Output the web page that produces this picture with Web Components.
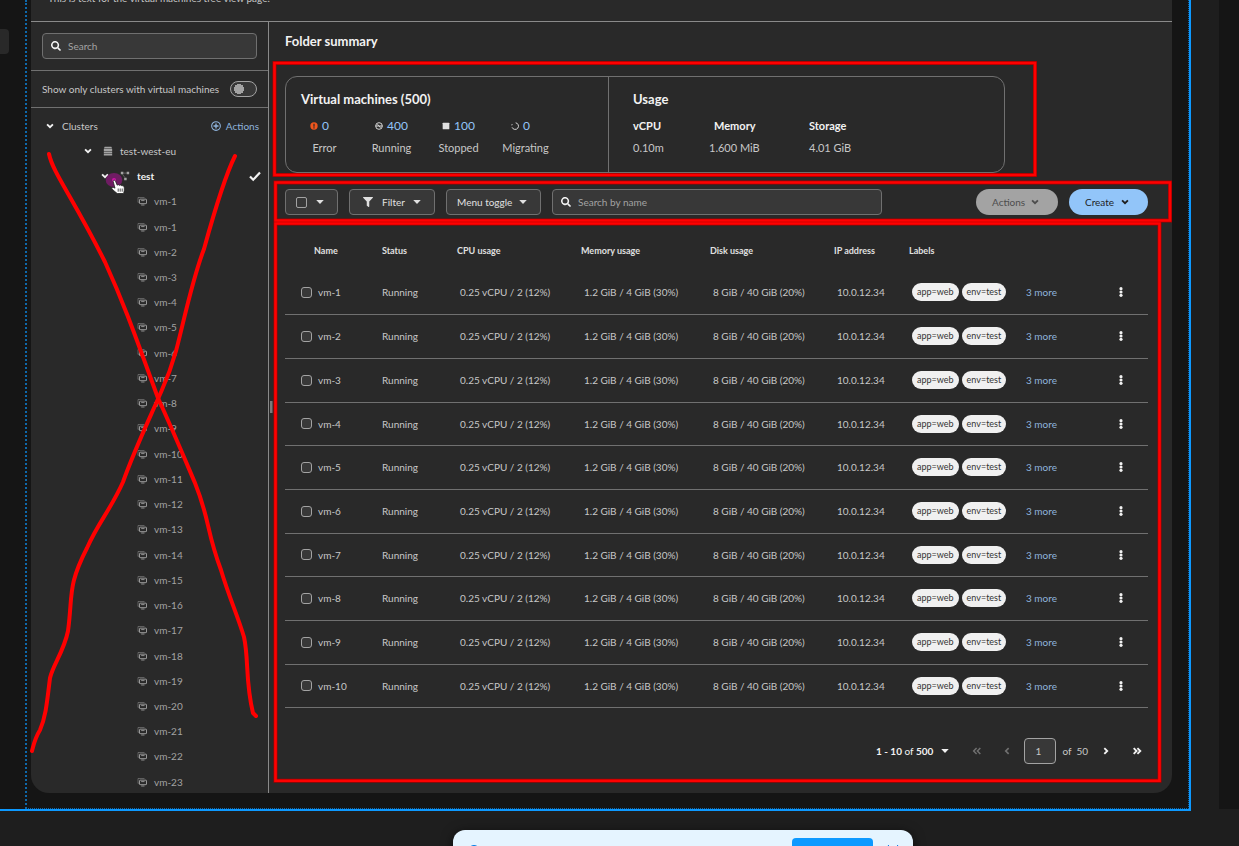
<!DOCTYPE html>
<html lang="en"><head><meta charset="utf-8"><title>Virtual machines</title>
<style>
:root{--text:#c7c7c7;--strong:#f2f2f2;--muted:#a3a3a3;--line:#707070;--field:#383838;--panel:#292929;--link:#92c5f9;--soft-link:#8fb4dd}
html,body{margin:0;height:100%;overflow:hidden}
body{background:#1e1e1e;color:var(--text);font:400 10px/14px Lato,"Noto Sans",sans-serif}
</style></head><body>
<design-canvas></design-canvas>
<script>
const BASE = `*{box-sizing:border-box}button,input{font:inherit;color:inherit}svg{display:block;flex:none}a{text-decoration:none;color:var(--link)}`;
const define = (name, css, html) => customElements.define(name, class extends HTMLElement {
  connectedCallback() {
    if (this.shadowRoot) return;
    const root = this.attachShadow({mode:'open'});
    root.innerHTML = `<style>${BASE}${css}</style>` + (typeof html === 'function' ? html(this) : html);
  }
});

const ICONS = {
  search:[512,'<path d="M505 443 405 343c-4-4-11-7-17-7h-16a208 208 0 1 0-36 36v16c0 6 3 13 7 17l100 100c9 9 24 9 34 0l28-28c9-10 9-25 0-34zM208 336a128 128 0 1 1 0-256 128 128 0 0 1 0 256z"/>'],
  chevron:[12,'<path d="M2.500 4 6 7.500 9.500 4" fill="none" stroke="currentColor" stroke-width="2.200"/>'],
  right:[12,'<path d="M4 2.500 7.500 6 4 9.500" fill="none" stroke="currentColor" stroke-width="2.200"/>'],
  left:[12,'<path d="M8 2.500 4.500 6 8 9.500" fill="none" stroke="currentColor" stroke-width="2"/>'],
  last:[12,'<path d="M2 2.500 5.500 6 2 9.500M6.500 2.500 10 6 6.500 9.500" fill="none" stroke="currentColor" stroke-width="2.200"/>'],
  first:[12,'<path d="M5.500 2.500 2 6 5.500 9.500M10 2.500 6.500 6 10 9.500" fill="none" stroke="currentColor" stroke-width="1.800"/>'],
  caret:[12,'<path d="M1.500 3.500H10.500L6 8.500Z"/>'],
  filter:[512,'<path d="M488 0H24C3 0-8 26 7 41l185 185v206c0 8 4 15 10 20l80 56c16 11 38 0 38-20V226L505 41c15-15 4-41-17-41z"/>'],
  plus:[12,'<circle cx="6" cy="6" r="5.200" fill="none" stroke="currentColor" stroke-width="1.300"/><path d="M6 3V9M3 6H9" stroke="currentColor" stroke-width="1.600"/>'],
  cluster:[12,'<path d="M2 1H10L11 3H1ZM1 3.6H11V6H1ZM1 6.6H11V9H1ZM1 9.6H11V11.5H1Z"/>'],
  project:[12,'<path d="M1 1H4V4H1ZM8 1H11V4H8ZM5 8H8V11H5Z"/><path d="M4 2.5H8M3 4 6 8" stroke="currentColor" opacity=".5"/>'],
  check:[12,'<path d="M1 6.500 4.200 9.700 11 2.500" fill="none" stroke="currentColor" stroke-width="2.200"/>'],
  vm:[12,'<path d="M1.200 7.500V1.800H9" fill="none" stroke="currentColor" opacity=".55"/><path d="M1 7.500H3" stroke="currentColor" opacity=".5"/><rect x="3" y="3.800" width="8.400" height="5.400" rx=".6" fill="none" stroke="currentColor" stroke-width="1.100"/><path d="M5 5.500H9M5 10.800H9" stroke="currentColor"/>'],
  error:[12,'<circle cx="6" cy="6" r="5.500"/><path d="M6 2.500V7M6 8V9.600" stroke="#292929" stroke-width="1.800"/>'],
  running:[12,'<circle cx="6" cy="6" r="5" fill="none" stroke="currentColor" stroke-width="1.400"/><path d="M1 6H11M3.500 3.800 6 5.500M8.500 8.200 6 6.500" stroke="currentColor" stroke-width="1.500"/>'],
  stopped:[12,'<rect x="1" y="1" width="10" height="10" rx="1"/>'],
  migrating:[12,'<path d="M7 1.200A5 5 0 1 1 1.600 8M1.200 5A5 5 0 0 1 2 3" fill="none" stroke="currentColor" stroke-width="1.400"/>'],
  kebab:[12,'<circle cx="6" cy="2" r="1.900"/><circle cx="6" cy="6" r="1.900"/><circle cx="6" cy="10" r="1.900"/>']
};
define('ui-icon', `:host{display:inline-block;width:10px;height:10px;flex:none}svg{width:100%;height:100%}`, el => {
  const [size, body] = ICONS[el.getAttribute('name')];
  return `<svg viewBox="0 0 ${size} ${size}" fill="currentColor" aria-hidden="true">${body}</svg>`;
});

define('search-field', `:host{display:block}label{display:flex;align-items:center;gap:7px;height:26px;padding:0 8px;border:1px solid var(--line);border-radius:4px;background:var(--field);color:var(--strong)}
input{flex:1;min-width:0;border:0;padding:0;background:none;outline:0}input::placeholder{color:var(--muted);opacity:1}`,
  el => `<label><ui-icon name="search"></ui-icon><input type="text" aria-label="${el.getAttribute('label')}" placeholder="${el.getAttribute('label')}"></label>`);

define('menu-button', `:host{display:block}button{display:flex;align-items:center;justify-content:space-between;width:100%;height:26px;padding:0 12px 0 10px;border:1px solid var(--line);border-radius:4px;background:var(--field);color:#e0e0e0}
:host([pill]) button{border:0;border-radius:13px;padding:0 18px 0 16px;background:var(--link);color:#1f1f1f}:host([disabled]) button{background:#a3a3a3;color:#4d4d4d}`,
  el => `<button type="button" ${el.hasAttribute('disabled')?'disabled':''} ${el.title?'':''}><slot></slot><ui-icon name="${el.hasAttribute('pill')?'chevron':'caret'}"></ui-icon></button>`);

define('tree-item', `:host{display:flex;flex:1;align-items:center;min-height:0;padding-right:9px;color:var(--text)}
:host([depth="0"]){padding-left:14px}:host([depth="1"]){padding-left:52px}:host([depth="2"]){padding-left:69px;color:var(--strong);font-weight:700}:host([depth="3"]){padding-left:106px;color:var(--muted)}
.toggle{display:flex;padding:0;border:0;background:none;color:var(--strong);margin-right:7px}:host([depth="1"]) .toggle,:host([depth="2"]) .toggle{margin-right:10px}
.kind{margin-right:7px;color:var(--muted)}.end{margin-left:auto}`,
  el => {
    const d = el.getAttribute('depth'), kind = {1:'cluster',2:'project',3:'vm'}[d];
    return (d < 3 ? '<button class="toggle" type="button" aria-label="Collapse"><ui-icon name="chevron"></ui-icon></button>' : '') +
      (kind ? `<ui-icon class="kind" name="${kind}"></ui-icon>` : '') + '<slot></slot><span class="end"><slot name="end"></slot></span>';
  });

define('tree-sidebar', `:host{display:flex;flex-direction:column;border-right:1px solid #8a8a8a}
.search{padding:11px}.only{display:flex;align-items:center;justify-content:space-between;height:38px;padding:0 11px;border:solid var(--line);border-width:1px 0}
input{appearance:none;margin:0;width:27px;height:16px;border:1px solid var(--muted);border-radius:8px;background:radial-gradient(circle at 8px 7px,#a3a3a3 0 5px,transparent 5px) var(--field)}
.tree{display:flex;flex-direction:column;flex:1;padding-top:5px;margin-bottom:-2px}
a{display:flex;gap:5px;align-items:center;color:var(--soft-link)}ui-icon.check{width:12px;height:12px;display:block;margin-right:-2px}`,
  `<div class="search"><search-field label="Search"></search-field></div>
   <div class="only"><label for="only">Show only clusters with virtual machines</label><input id="only" type="checkbox" role="switch"></div>
   <div class="tree"><tree-item depth="0">Clusters<a slot="end" href="#"><ui-icon name="plus"></ui-icon>Actions</a></tree-item>
   <tree-item depth="1">test-west-eu</tree-item><tree-item depth="2">test<ui-icon slot="end" class="check" name="check"></ui-icon></tree-item>
   ${[1,...Array.from({length:23},(_,i)=>i+1)].map(n=>`<tree-item depth="3">vm-${n}</tree-item>`).join('')}</div>`);

define('status-count', `:host{display:flex;flex-direction:column;align-items:center;gap:6px;width:67px;font-size:11px;line-height:16px}
a{display:flex;align-items:center;gap:4px;font-size:12px}:host([count="0"]) a{margin-right:10px}ui-icon{width:8px;height:8px;color:#e0e0e0}:host([icon=error]) ui-icon{color:#f0561d}`,
  el => `<a href="#"><ui-icon name="${el.getAttribute('icon')}"></ui-icon>${el.getAttribute('count')}</a><slot></slot>`);

define('folder-summary', `:host{display:grid;grid-template-columns:322fr 396fr;max-width:720px;height:97px;border:1px solid var(--line);border-radius:12px}
section{padding:14px 0 0 15px}section+section{border-left:1px solid var(--line);padding-left:24px}
h3{margin:0 0 11px;font-size:13px;line-height:16px;font-weight:700;color:var(--strong)}.row{display:flex;margin-left:-10px}
dl{display:grid;grid-template-columns:76px 100px auto;justify-content:start;gap:6px 0;margin:0;font-size:11px;line-height:16px}dt{font-weight:700;color:var(--strong)}dd{margin:0}dt.m{padding-left:5px}`,
  `<section><h3>Virtual machines (500)</h3><div class="row"><status-count icon="error" count="0">Error</status-count><status-count icon="running" count="400">Running</status-count><status-count icon="stopped" count="100">Stopped</status-count><status-count icon="migrating" count="0">Migrating</status-count></div></section>
   <section><h3>Usage</h3><dl><dt>vCPU</dt><dt class="m">Memory</dt><dt>Storage</dt><dd>0.10m</dd><dd>1.600 MiB</dd><dd>4.01 GiB</dd></dl></section>`);

define('vm-toolbar', `:host{display:flex;align-items:center;gap:11px}
.bulk{width:53px}.filter{width:86px}.menu{width:95px}search-field{width:330px}.push{width:82px;margin-left:auto}.create{width:79px}
.f{display:flex;align-items:center;gap:9px;padding-left:3px}input{appearance:none;margin:0;width:11px;height:11px;border:1px solid var(--muted);border-radius:2px}`,
  `<menu-button class="bulk"><input type="checkbox" aria-label="Select all"></menu-button><menu-button class="filter"><span class="f"><ui-icon name="filter"></ui-icon>Filter</span></menu-button>
   <menu-button class="menu">Menu toggle</menu-button><search-field label="Search by name"></search-field>
   <menu-button class="push" pill disabled>Actions</menu-button><menu-button class="create" pill>Create</menu-button>`);

define('vm-label', `:host{display:inline-block;height:18px;padding:0 5px;border-radius:9px;background:#f0f0f0;color:#333;font-size:9px;line-height:18px;margin-right:3px;vertical-align:middle}`, `<slot></slot>`);

define('vm-table', `:host{display:block}table{width:100%;table-layout:fixed;border-collapse:collapse;white-space:nowrap}
th,td{padding:0;text-align:left}thead tr{height:40px}th{font-size:9px;font-weight:700;color:#e0e0e0}th:first-child{padding-left:29px}
tbody tr{height:44px}tbody tr:nth-child(3n+1){height:43px}td{border-bottom:1px solid var(--line);padding-left:3px}td.s{padding-left:0}td.n{padding-left:16px}
a{color:var(--soft-link)}.name{display:flex;align-items:center;gap:6px}input{appearance:none;margin:0;width:11px;height:11px;border:1px solid var(--muted);border-radius:3px;background:var(--field)}
button{display:flex;border:0;background:none;padding:0;color:var(--strong)}`,
  `<table><colgroup>${[97,75,124,129,124,75,114,90].map(w=>`<col style="width:${w}px">`).join('')}<col></colgroup>
  <thead><tr><th>Name</th><th>Status</th><th>CPU usage</th><th>Memory usage</th><th>Disk usage</th><th>IP address</th><th>Labels</th><th></th><th></th></tr></thead><tbody>
  ${Array.from({length:10},(_,i)=>i+1).map(n=>`<tr><td class="n"><label class="name"><input type="checkbox">vm-${n}</label></td><td class="s">Running</td><td>0.25 vCPU / 2 (12%)</td><td>1.2 GiB / 4 GiB (30%)</td><td>8 GiB / 40 GiB (20%)</td><td>10.0.12.34</td><td><vm-label>app=web</vm-label><vm-label>env=test</vm-label></td><td><a href="#">3 more</a></td><td><button type="button" aria-label="Row actions"><ui-icon name="kebab"></ui-icon></button></td></tr>`).join('')}</tbody></table>`);

define('vm-pagination', `:host{display:flex;align-items:center;justify-content:flex-end}
button{display:flex;align-items:center;gap:7px;border:0;background:none;padding:0;color:var(--strong)}button:disabled{color:#707070}b{font-weight:700}
input{width:32px;height:26px;margin:0 6px 0 12px;border:1px solid var(--muted);border-radius:4px;background:var(--field);padding:0 10px;color:var(--text)}
.first{margin-left:22px}.prev{margin-left:20px}.next{margin-left:13px}.last{margin-left:21px}`,
  `<button type="button"><span><b>1 - 10</b> of <b>500</b></span><ui-icon name="caret"></ui-icon></button>
  <button class="first" type="button" disabled aria-label="First page"><ui-icon name="first"></ui-icon></button><button class="prev" type="button" disabled aria-label="Previous page"><ui-icon name="left"></ui-icon></button>
  <input type="text" aria-label="Current page" value="1"><span>of&nbsp; 50</span>
  <button class="next" type="button" aria-label="Next page"><ui-icon name="right"></ui-icon></button><button class="last" type="button" aria-label="Last page"><ui-icon name="last"></ui-icon></button>`);

define('vm-page', `:host{display:block;border-radius:0 0 18px 18px;background:var(--panel);overflow:hidden}
header{display:flex;align-items:flex-end;height:22px;padding:0 17px 16px;border-bottom:1px solid #8a8a8a}p{margin:0}
.body{display:grid;grid-template-columns:238px 1fr}
main{padding:11px 24px 29px 16px}h2{margin:0 0 27px;font-size:13px;line-height:16px;font-weight:700;color:var(--strong)}
vm-toolbar{margin-top:16px}vm-table{margin-top:16px}vm-pagination{margin:30px 6px 0 0}`,
  `<header><p>This is text for the virtual machines tree view page.</p></header><div class="body"><tree-sidebar></tree-sidebar><main><h2>Folder summary</h2><folder-summary></folder-summary><vm-toolbar></vm-toolbar><vm-table></vm-table><vm-pagination></vm-pagination></main></div>`);

define('review-marks', `:host{position:absolute;inset:0;pointer-events:none}svg{width:100%;height:100%;overflow:visible}`,
  `<svg fill="none" aria-hidden="true"><rect x="270" y="401" width="2.500" height="12" fill="#7a7a7a"/>
  <g stroke="#a00000" stroke-width="4"><path d="M274.500 63H1035V175H274.500ZM275.500 182.500H1170V220.500H275.500ZM275.500 223.500H1159.500V780.700H275.500Z"/></g>
  <g stroke="#f00" stroke-width="2.600"><path d="M274.500 63H1035V175H274.500ZM275.500 182.500H1170V220.500H275.500ZM275.500 223.500H1159.500V780.700H275.500Z"/></g>
  <ellipse cx="114" cy="180" rx="8.300" ry="7" fill="#6f1c63"/><circle cx="114" cy="180" r="2" fill="#d012a8"/>
  <g stroke="#f00" stroke-width="4" stroke-linecap="round" stroke-linejoin="round"><path d="M49 154C53 173 72 196 105 262C125 306 135 335 158 398C174 433 181 450 195 483C210 520 206 530 221 570C229 597 237 614 244 637C249 660 245 680 253 713L256 716"/><path d="M235 156C226 174 212 220 204 249C192 280 183 325 176 351C169 376 164 385 158 399C142 435 133 454 123 482C111 509 98 523 87 548C67 587 73 595 68 631C64 651 53 665 50 678C47 702 46 716 40 730C35 738 34 743 32 751"/></g>
  <path d="M113.200 181.500C113 180 115 179.800 115.500 181.200L117.200 185.200C118 184.400 119 184.600 119.500 185.400C120.300 184.700 121.300 185 121.800 185.900C122.800 185.400 124 186 124.200 187.300C124.500 189.500 124.200 191.500 123.600 193.500H117.200C115.500 192 113.500 190.500 112 189C111.200 187.800 112.600 186.700 114 187.600L115 188.200Z" fill="#fff" stroke="#222" stroke-width=".8"/><path d="M118.200 188.500V191.700M120.200 188.500V191.700M122.200 188.500V191.700" stroke="#222" stroke-width=".8"/></svg>`);

define('notice-bar', `:host{position:fixed;left:453px;bottom:-32px;width:460px;height:48px;border-radius:12px;background:#e5f4ff;box-shadow:0 2px 12px #0009;display:flex;align-items:center;padding:0 14px 0 15px;gap:14px}
button{border:0;background:#0d99ff;width:81px;height:32px;border-radius:4px;margin-left:auto}.close{width:12px;background:none;padding:0;margin:0}svg{width:12px;height:18px}`,
  `<svg viewBox="0 0 12 18" fill="none" stroke="#007be5"><circle cx="6" cy="6" r="5.500"/></svg><button type="button" aria-label="Confirm"></button><button class="close" type="button" aria-label="Close"><svg viewBox="0 0 12 18" stroke="#007be5"><path d="M1 0 11 12M11 0 1 12"/></svg></button>`);

define('design-canvas', `:host{display:block;position:relative;min-height:100vh}.frames{display:flex;gap:28px}
.frame{flex:1;min-width:0;display:grid;grid-template-columns:25px 1fr;background:#151515;border:solid #0d99ff;border-width:0 2px 2px 0}
.inner{border:dotted #0f68aa;border-width:0 1px 1px 2px;padding:0 16px 15px 4px}
.tab{margin-top:29px;height:25px;width:9px;border-radius:0 4px 4px 0;background:var(--panel)}.next{width:20px;background:#151515;margin-bottom:2px}`,
  `<div class="frames"><div class="frame"><div class="tab"></div><div class="inner"><vm-page></vm-page></div></div><div class="next"></div></div><review-marks></review-marks><notice-bar></notice-bar>`);
</script></body></html>
